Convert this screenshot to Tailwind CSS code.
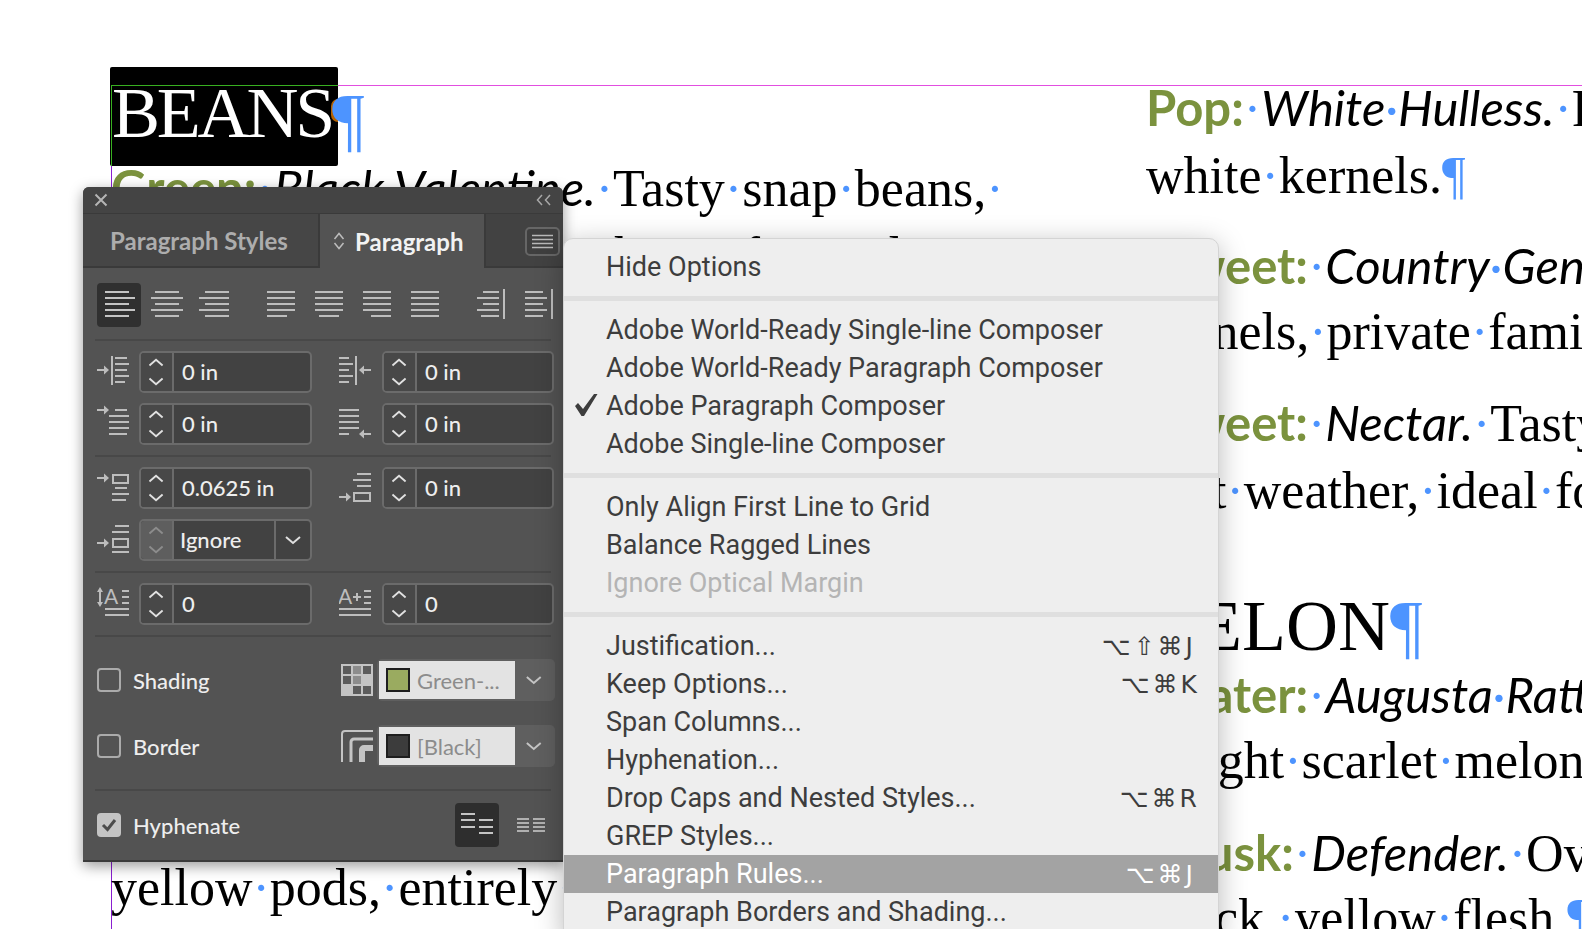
<!DOCTYPE html>
<html lang="en">
<head>
<meta charset="UTF-8">
<title>Paragraph panel</title>
<script src="https://cdn.jsdelivr.net/npm/@tailwindcss/browser@4"></script>
</head>
<body class="bg-white">
<div class="relative w-[1582px] h-[929px] overflow-hidden bg-white text-black font-['Liberation_Serif',serif] text-[52px] leading-[67px]">

  <!-- document canvas -->
  <div class="absolute left-[338px] top-[85px] w-[1244px] h-px bg-[#e24ee0]"></div>
  <div class="absolute left-[111px] top-[166px] w-px h-[763px] bg-[#8a1fd0]"></div>
  <div class="absolute left-[110px] top-[67px] w-[228px] h-[99px] bg-black rounded-[2px]">
    <div class="absolute left-px top-[18px] w-[227px] h-px bg-[#38b020]"></div>
    <div class="absolute left-px top-[18px] w-px h-[81px] bg-[#38b020]"></div>
    <div class="absolute left-[2px] top-[10px] text-white text-[72px] leading-[72px] tracking-[-3.2px] whitespace-nowrap">BEANS</div>
    <div class="absolute left-[221px] top-[32px] w-[7px] h-[23px] bg-[#b56200] rounded-l-full"></div>
  </div>
  <div class="absolute left-[332px] top-[83px] text-[#4d94ff] text-[72px] leading-[72px]">¶</div>

  <div class="absolute whitespace-nowrap left-[111px] top-[154px]"><span class="font-['Lato',sans-serif] font-bold text-[49px] text-[#7b923e]">Green:</span><span class="text-[#4d94ff]">·</span><span class="font-['Lato',sans-serif] italic text-[49px]">Black Valentine.</span><span class="text-[#4d94ff]">·</span>Tasty<span class="text-[#4d94ff]">·</span>snap<span class="text-[#4d94ff]">·</span>beans,<span class="text-[#4d94ff]">·</span></div>
  <div class="absolute whitespace-nowrap left-[594px] top-[222px]">shape,<span class="text-[#4d94ff]">·</span>favored</div>
  <div class="absolute whitespace-nowrap left-[111px] top-[854px]">yellow<span class="text-[#4d94ff]">·</span>pods,<span class="text-[#4d94ff]">·</span>entirely<span class="text-[#4d94ff]">·</span>stringless</div>

  <div class="absolute whitespace-nowrap left-[1146px] top-[74px]"><span class="font-['Lato',sans-serif] font-bold text-[49px] text-[#7b923e]">Pop:</span><span class="text-[#4d94ff]">·</span><span class="font-['Lato',sans-serif] italic text-[49px]">White<span class="text-[#4d94ff]">·</span>Hulless.</span><span class="text-[#4d94ff]">·</span>Plump</div>
  <div class="absolute whitespace-nowrap left-[1146px] top-[142px]">white<span class="text-[#4d94ff]">·</span>kernels.<span class="text-[#4d94ff]">¶</span></div>
  <div class="absolute whitespace-nowrap left-[1160px] top-[232px]"><span class="font-['Lato',sans-serif] font-bold text-[49px] text-[#7b923e]">Sweet:</span><span class="text-[#4d94ff]">·</span><span class="font-['Lato',sans-serif] italic text-[49px]">Country<span class="text-[#4d94ff]">·</span>Gentleman</span></div>
  <div class="absolute whitespace-nowrap left-[1146px] top-[298px]">kernels,<span class="text-[#4d94ff]">·</span>private<span class="text-[#4d94ff]">·</span>family</div>
  <div class="absolute whitespace-nowrap left-[1160px] top-[389px]"><span class="font-['Lato',sans-serif] font-bold text-[49px] text-[#7b923e]">Sweet:</span><span class="text-[#4d94ff]">·</span><span class="font-['Lato',sans-serif] italic text-[49px]">Nectar.</span><span class="text-[#4d94ff]">·</span>Tasty,</div>
  <div class="absolute whitespace-nowrap left-[1160px] top-[457px]">hot<span class="text-[#4d94ff]">·</span>weather,<span class="text-[#4d94ff]">·</span>ideal<span class="text-[#4d94ff]">·</span>for</div>
  <div class="absolute whitespace-nowrap left-[1134px] top-[590px] text-[72px] leading-[72px]">MELON<span class="text-[#4d94ff]">¶</span></div>
  <div class="absolute whitespace-nowrap left-[1160px] top-[661px]"><span class="font-['Lato',sans-serif] font-bold text-[49px] text-[#7b923e]">Water:</span><span class="text-[#4d94ff]">·</span><span class="font-['Lato',sans-serif] italic text-[49px]">Augusta<span class="text-[#4d94ff]">·</span>Rattlesnake</span></div>
  <div class="absolute whitespace-nowrap left-[1160px] top-[727px]">bright<span class="text-[#4d94ff]">·</span>scarlet<span class="text-[#4d94ff]">·</span>melon.</div>
  <div class="absolute whitespace-nowrap left-[1160px] top-[819px]"><span class="font-['Lato',sans-serif] font-bold text-[49px] text-[#7b923e]">Musk:</span><span class="text-[#4d94ff]">·</span><span class="font-['Lato',sans-serif] italic text-[49px]">Defender.</span><span class="text-[#4d94ff]">·</span>Oval</div>
  <div class="absolute whitespace-nowrap left-[1160px] top-[884px]">thick,<span class="text-[#4d94ff]">·</span>yellow<span class="text-[#4d94ff]">·</span>flesh.<span class="text-[#4d94ff]">¶</span></div>

  <!-- paragraph panel -->
  <div class="absolute left-[83px] top-[187px] w-[480px] h-[675px] flex flex-col bg-[#535353] rounded-t-[6px] border-b-2 border-[#3a3a3a] shadow-[0_4px_14px_rgba(0,0,0,0.4)] font-['Lato',sans-serif] text-[#eeeeee]">
    <!-- title bar -->
    <div class="h-[27px] flex items-center justify-between px-[11px] bg-[#444444] rounded-t-[6px] border-b border-[#3a3a3a]">
      <svg class="w-[14px] h-[14px]" viewBox="0 0 14 14" fill="none" stroke="#b5b5b5" stroke-width="2"><path d="M1.5 1.5l11 11M12.5 1.5l-11 11"/></svg>
      <svg class="w-[16px] h-[12px]" viewBox="0 0 16 12" fill="none" stroke="#a8a8a8" stroke-width="1.5"><path d="M6 1L1.5 6 6 11M14 1L9.5 6 14 11"/></svg>
    </div>
    <!-- tabs -->
    <div class="h-[54px] flex bg-[#424242]">
      <div class="w-[235px] flex items-center pl-[27px] bg-[#464646] border-b-2 border-[#3a3a3a] text-[#adadad] font-bold text-[24px] whitespace-nowrap">Paragraph Styles</div>
      <div class="w-[168px] flex items-center pl-[13px] gap-[10px] bg-[#535353] border-l-2 border-r-2 border-[#3a3a3a] font-bold text-[24px] text-[#f2f2f2]">
        <svg class="w-[12px] h-[18px]" viewBox="0 0 12 18" fill="none" stroke="#bdbdbd" stroke-width="1.5"><path d="M1.5 7L6 1.5 10.5 7M1.5 11L6 16.5 10.5 11"/></svg>
        <span>Paragraph</span>
      </div>
      <div class="flex-1 flex items-start border-b-2 border-[#3a3a3a] pl-[39px] pt-[13px]">
        <div class="w-[35px] h-[29px] flex items-center justify-center bg-[#3f3f3f] border-2 border-[#666666] rounded-[5px]">
          <svg class="w-[21px] h-[15px]" viewBox="0 0 21 15" fill="none" stroke="#b8b8b8" stroke-width="1.5"><path d="M0 1.5h21M0 5.5h21M0 9.5h21M0 13.5h21"/></svg>
        </div>
      </div>
    </div>
    <!-- alignment -->
    <div class="h-[71px] flex items-start pl-[14px] pt-[15px] gap-[4px]">
      <svg class="w-[44px] h-[44px] bg-[#303030] rounded-[4px]" viewBox="0 0 44 44" fill="none" stroke="#c4c4c4" stroke-width="2"><path d="M8 9h24M8 15h30M8 21h24M8 27h30M8 33h24"/></svg>
      <svg class="w-[44px] h-[44px]" viewBox="0 0 44 44" fill="none" stroke="#bdbdbd" stroke-width="2"><path d="M10 9h24M6 15h32M10 21h24M6 27h32M10 33h24"/></svg>
      <svg class="w-[44px] h-[44px]" viewBox="0 0 44 44" fill="none" stroke="#bdbdbd" stroke-width="2"><path d="M12 9h24M6 15h30M12 21h24M6 27h30M12 33h24"/></svg>
      <svg class="w-[44px] h-[44px] ml-[18px]" viewBox="0 0 44 44" fill="none" stroke="#bdbdbd" stroke-width="2"><path d="M8 9h28M8 15h28M8 21h28M8 27h28M8 33h20"/></svg>
      <svg class="w-[44px] h-[44px]" viewBox="0 0 44 44" fill="none" stroke="#bdbdbd" stroke-width="2"><path d="M8 9h28M8 15h28M8 21h28M8 27h28M12 33h20"/></svg>
      <svg class="w-[44px] h-[44px]" viewBox="0 0 44 44" fill="none" stroke="#bdbdbd" stroke-width="2"><path d="M8 9h28M8 15h28M8 21h28M8 27h28M16 33h20"/></svg>
      <svg class="w-[44px] h-[44px]" viewBox="0 0 44 44" fill="none" stroke="#bdbdbd" stroke-width="2"><path d="M8 9h28M8 15h28M8 21h28M8 27h28M8 33h28"/></svg>
      <svg class="w-[44px] h-[44px] ml-[18px]" viewBox="0 0 44 44" fill="none" stroke="#bdbdbd" stroke-width="2"><path d="M14 9h16M8 15h22M14 21h16M8 27h22M12 33h18M35 6v30"/></svg>
      <svg class="w-[44px] h-[44px]" viewBox="0 0 44 44" fill="none" stroke="#bdbdbd" stroke-width="2"><path d="M8 9h18M8 15h22M8 21h18M8 27h22M8 33h18M35 6v30"/></svg>
    </div>
    <div class="h-[2px] mx-[12px] bg-[#484848]"></div>

    <!-- indents -->
    <div class="flex pl-[14px] mt-[10px]">
      <div class="flex w-[215px]">
        <svg class="w-[32px] h-[42px] shrink-0" viewBox="0 0 32 42" fill="none" stroke="#bdbdbd" stroke-width="2"><path d="M0 19h8M15 5v29M18 7h12M18 13h14M18 19h12M18 25h14M18 31h10"/><path d="M7 14.5l5 4.5-5 4.5z" fill="#bdbdbd" stroke="none"/></svg>
        <div class="ml-[10px] w-[173px] h-[42px] flex border-2 border-[#6b6b6b] rounded-[5px] bg-[#424242]">
          <svg class="w-[33px] h-[38px] shrink-0 bg-[#484848] rounded-l-[3px] border-r-2 border-[#6b6b6b]" viewBox="0 0 33 38" fill="none" stroke="#e0e0e0" stroke-width="2"><path d="M9 12l7-6 7 6M9 26l7 6 7-6"/></svg>
          <span class="pl-[8px] text-[22px] font-medium leading-[38px]">0 in</span>
        </div>
      </div>
      <div class="flex w-[215px] ml-[27px]">
        <svg class="w-[32px] h-[42px] shrink-0" viewBox="0 0 32 42" fill="none" stroke="#bdbdbd" stroke-width="2"><path d="M0 7h10M0 13h14M0 19h10M0 25h14M0 31h10M17 5v29M24 19h8"/><path d="M25 14.5L20 19l5 4.5z" fill="#bdbdbd" stroke="none"/></svg>
        <div class="ml-[11px] w-[172px] h-[42px] flex border-2 border-[#6b6b6b] rounded-[5px] bg-[#424242]">
          <svg class="w-[33px] h-[38px] shrink-0 bg-[#484848] rounded-l-[3px] border-r-2 border-[#6b6b6b]" viewBox="0 0 33 38" fill="none" stroke="#e0e0e0" stroke-width="2"><path d="M9 12l7-6 7 6M9 26l7 6 7-6"/></svg>
          <span class="pl-[8px] text-[22px] font-medium leading-[38px]">0 in</span>
        </div>
      </div>
    </div>
    <div class="flex pl-[14px] mt-[10px]">
      <div class="flex w-[215px]">
        <svg class="w-[32px] h-[42px] shrink-0" viewBox="0 0 32 42" fill="none" stroke="#bdbdbd" stroke-width="2"><path d="M0 7h8M18 7h12M12 13h20M12 19h20M12 25h20M12 31h18"/><path d="M7 2.5L12 7l-5 4.5z" fill="#bdbdbd" stroke="none"/></svg>
        <div class="ml-[10px] w-[173px] h-[42px] flex border-2 border-[#6b6b6b] rounded-[5px] bg-[#424242]">
          <svg class="w-[33px] h-[38px] shrink-0 bg-[#484848] rounded-l-[3px] border-r-2 border-[#6b6b6b]" viewBox="0 0 33 38" fill="none" stroke="#e0e0e0" stroke-width="2"><path d="M9 12l7-6 7 6M9 26l7 6 7-6"/></svg>
          <span class="pl-[8px] text-[22px] font-medium leading-[38px]">0 in</span>
        </div>
      </div>
      <div class="flex w-[215px] ml-[27px]">
        <svg class="w-[32px] h-[42px] shrink-0" viewBox="0 0 32 42" fill="none" stroke="#bdbdbd" stroke-width="2"><path d="M0 7h20M0 13h20M0 19h20M0 25h20M0 31h10M24 31h8"/><path d="M25 26.5L20 31l5 4.5z" fill="#bdbdbd" stroke="none"/></svg>
        <div class="ml-[11px] w-[172px] h-[42px] flex border-2 border-[#6b6b6b] rounded-[5px] bg-[#424242]">
          <svg class="w-[33px] h-[38px] shrink-0 bg-[#484848] rounded-l-[3px] border-r-2 border-[#6b6b6b]" viewBox="0 0 33 38" fill="none" stroke="#e0e0e0" stroke-width="2"><path d="M9 12l7-6 7 6M9 26l7 6 7-6"/></svg>
          <span class="pl-[8px] text-[22px] font-medium leading-[38px]">0 in</span>
        </div>
      </div>
    </div>
    <div class="h-[2px] mx-[12px] mt-[10px] bg-[#484848]"></div>

    <!-- space before / after -->
    <div class="flex pl-[14px] mt-[10px]">
      <div class="flex w-[215px]">
        <svg class="w-[32px] h-[42px] shrink-0" viewBox="0 0 32 42" fill="none" stroke="#bdbdbd" stroke-width="2"><path d="M0 11h8M18 21h12M15 27h17M15 33h14"/><rect x="16" y="8" width="15" height="8"/><path d="M7 6.5l5 4.5-5 4.5z" fill="#bdbdbd" stroke="none"/></svg>
        <div class="ml-[10px] w-[173px] h-[42px] flex border-2 border-[#6b6b6b] rounded-[5px] bg-[#424242]">
          <svg class="w-[33px] h-[38px] shrink-0 bg-[#484848] rounded-l-[3px] border-r-2 border-[#6b6b6b]" viewBox="0 0 33 38" fill="none" stroke="#e0e0e0" stroke-width="2"><path d="M9 12l7-6 7 6M9 26l7 6 7-6"/></svg>
          <span class="pl-[8px] text-[22px] font-medium leading-[38px]">0.0625 in</span>
        </div>
      </div>
      <div class="flex w-[215px] ml-[27px]">
        <svg class="w-[32px] h-[42px] shrink-0" viewBox="0 0 32 42" fill="none" stroke="#bdbdbd" stroke-width="2"><path d="M18 7h14M14 13h18M18 19h14M0 30h8"/><rect x="15" y="26" width="16" height="8"/><path d="M7 25.5l5 4.5-5 4.5z" fill="#bdbdbd" stroke="none"/></svg>
        <div class="ml-[11px] w-[172px] h-[42px] flex border-2 border-[#6b6b6b] rounded-[5px] bg-[#424242]">
          <svg class="w-[33px] h-[38px] shrink-0 bg-[#484848] rounded-l-[3px] border-r-2 border-[#6b6b6b]" viewBox="0 0 33 38" fill="none" stroke="#e0e0e0" stroke-width="2"><path d="M9 12l7-6 7 6M9 26l7 6 7-6"/></svg>
          <span class="pl-[8px] text-[22px] font-medium leading-[38px]">0 in</span>
        </div>
      </div>
    </div>
    <div class="flex pl-[14px] mt-[10px]">
      <svg class="w-[32px] h-[42px] shrink-0" viewBox="0 0 32 42" fill="none" stroke="#bdbdbd" stroke-width="2"><path d="M18 7h14M15 13h17M0 24h8M15 33h17"/><rect x="16" y="20" width="15" height="8"/><path d="M7 19.5l5 4.5-5 4.5z" fill="#bdbdbd" stroke="none"/></svg>
      <div class="ml-[10px] w-[173px] h-[42px] flex border-2 border-[#6b6b6b] rounded-[5px] bg-[#424242]">
        <svg class="w-[33px] h-[38px] shrink-0 bg-[#5e5e5e] rounded-l-[3px] border-r-2 border-[#6b6b6b]" viewBox="0 0 33 38" fill="none" stroke="#8c8c8c" stroke-width="2"><path d="M9 12l7-6 7 6M9 26l7 6 7-6"/></svg>
        <span class="w-[102px] pl-[6px] text-[22px] font-medium leading-[38px] border-r-2 border-[#6b6b6b]">Ignore</span>
        <svg class="w-[34px] h-[38px]" viewBox="0 0 34 38" fill="none" stroke="#e0e0e0" stroke-width="2"><path d="M10 16l7 6 7-6"/></svg>
      </div>
    </div>
    <div class="h-[2px] mx-[12px] mt-[10px] bg-[#484848]"></div>

    <!-- drop caps -->
    <div class="flex pl-[14px] mt-[10px]">
      <div class="flex w-[215px]">
        <svg class="w-[32px] h-[42px] shrink-0" viewBox="0 0 32 42" fill="none" stroke="#bdbdbd" stroke-width="2"><path d="M3 9v10M25 8h7M25 14h7M25 20h7M8 26h24M8 32h24"/><path d="M3 4l3 5H0zM3 24l3-5H0z" fill="#bdbdbd" stroke="none"/><text x="7" y="21" font-family="Lato" font-size="21" fill="#bdbdbd" stroke="none">A</text></svg>
        <div class="ml-[10px] w-[173px] h-[42px] flex border-2 border-[#6b6b6b] rounded-[5px] bg-[#424242]">
          <svg class="w-[33px] h-[38px] shrink-0 bg-[#484848] rounded-l-[3px] border-r-2 border-[#6b6b6b]" viewBox="0 0 33 38" fill="none" stroke="#e0e0e0" stroke-width="2"><path d="M9 12l7-6 7 6M9 26l7 6 7-6"/></svg>
          <span class="pl-[8px] text-[22px] font-medium leading-[38px]">0</span>
        </div>
      </div>
      <div class="flex w-[215px] ml-[27px]">
        <svg class="w-[32px] h-[42px] shrink-0" viewBox="0 0 32 42" fill="none" stroke="#bdbdbd" stroke-width="2"><path d="M14 14h8M18 10v8M25 8h7M25 14h7M25 20h7M0 26h32M0 32h32"/><text x="-1" y="21" font-family="Lato" font-size="21" fill="#bdbdbd" stroke="none">A</text></svg>
        <div class="ml-[11px] w-[172px] h-[42px] flex border-2 border-[#6b6b6b] rounded-[5px] bg-[#424242]">
          <svg class="w-[33px] h-[38px] shrink-0 bg-[#484848] rounded-l-[3px] border-r-2 border-[#6b6b6b]" viewBox="0 0 33 38" fill="none" stroke="#e0e0e0" stroke-width="2"><path d="M9 12l7-6 7 6M9 26l7 6 7-6"/></svg>
          <span class="pl-[8px] text-[22px] font-medium leading-[38px]">0</span>
        </div>
      </div>
    </div>
    <div class="h-[2px] mx-[12px] mt-[10px] bg-[#484848]"></div>

    <!-- shading -->
    <div class="flex items-center pl-[14px] pr-[8px] mt-[22px] h-[42px]">
      <div class="w-[24px] h-[24px] border-2 border-[#ababab] rounded-[4px]"></div>
      <span class="ml-[12px] text-[22px] font-medium">Shading</span>
      <svg class="ml-auto w-[32px] h-[32px]" viewBox="0 0 32 32"><rect width="32" height="32" fill="#c4c4c4"/><path d="M2 2h8v8H2zM22 2h8v8h-8zM2 12h8v8H2zM22 22h8v8h-8zM12 22h8v8h-8z" fill="#5c5c5c"/><path d="M12 2h8v8h-8zM12 12h8v8h-8z" fill="#8c8c8c"/></svg>
      <div class="ml-[4px] w-[178px] h-[42px] p-[2px] flex bg-[#5f5f5f] rounded-[5px]">
        <div class="w-[138px] h-[38px] flex items-center pl-[7px] bg-[#e3e3e3]">
          <div class="w-[24px] h-[24px] bg-[#9aab60] border-2 border-[#1e1e1e]"></div>
          <span class="ml-[7px] text-[22px] text-[#8c8c8c] whitespace-nowrap">Green-...</span>
        </div>
        <svg class="w-[38px] h-[38px]" viewBox="0 0 38 38" fill="none" stroke="#c4c4c4" stroke-width="2"><path d="M12 16l7 6 7-6"/></svg>
      </div>
    </div>
    <!-- border -->
    <div class="flex items-center pl-[14px] pr-[8px] mt-[24px] h-[42px]">
      <div class="w-[24px] h-[24px] border-2 border-[#ababab] rounded-[4px]"></div>
      <span class="ml-[12px] text-[22px] font-medium">Border</span>
      <svg class="ml-auto w-[32px] h-[32px]" viewBox="0 0 32 32" fill="none" stroke="#c4c4c4"><path d="M1 32V4a3 3 0 0 1 3-3h28" stroke-width="2"/><path d="M10 32V12a3 3 0 0 1 3-3h19" stroke-width="3"/><path d="M21 32V20a2 2 0 0 1 2-2h9" stroke-width="6"/></svg>
      <div class="ml-[4px] w-[178px] h-[42px] p-[2px] flex bg-[#5f5f5f] rounded-[5px]">
        <div class="w-[138px] h-[38px] flex items-center pl-[7px] bg-[#e3e3e3]">
          <div class="w-[24px] h-[24px] bg-[#3c3c3c] border-2 border-[#1e1e1e]"></div>
          <span class="ml-[7px] text-[22px] text-[#8c8c8c] whitespace-nowrap">[Black]</span>
        </div>
        <svg class="w-[38px] h-[38px]" viewBox="0 0 38 38" fill="none" stroke="#c4c4c4" stroke-width="2"><path d="M12 16l7 6 7-6"/></svg>
      </div>
    </div>
    <div class="h-[2px] mx-[12px] mt-[22px] bg-[#484848]"></div>
    <!-- hyphenate -->
    <div class="flex items-center pl-[14px] mt-[12px] h-[44px]">
      <div class="w-[24px] h-[24px] flex items-center justify-center bg-[#c4c4c4] rounded-[4px]">
        <svg class="w-[16px] h-[14px]" viewBox="0 0 16 14" fill="none" stroke="#4c4c4c" stroke-width="3"><path d="M2 7l4.500 4.500L14 2"/></svg>
      </div>
      <span class="ml-[12px] text-[22px] font-medium">Hyphenate</span>
      <svg class="ml-auto w-[44px] h-[44px] bg-[#2e2e2e] rounded-[4px]" viewBox="0 0 44 44" fill="none" stroke="#c4c4c4" stroke-width="2"><path d="M6 11h14M6 17h14M6 24h14M24 17h14M24 24h14M24 30h14"/></svg>
      <svg class="ml-[18px] mr-[18px] w-[28px] h-[14px]" viewBox="0 0 28 14" fill="none" stroke="#b0b0b0" stroke-width="2"><path d="M0 1h12M16 1h12M0 5h12M16 5h12M0 9h12M16 9h12M0 13h12M16 13h12"/></svg>
    </div>
  </div>

  <!-- panel menu -->
  <div class="absolute left-[563px] top-[238px] w-[656px] h-[700px] pt-[9px] bg-[#eeeeee] rounded-t-[10px] border border-[#d4d4d4] shadow-[0_6px_28px_rgba(0,0,0,0.28)] font-['Roboto',sans-serif] text-[27px] text-[#3d3d3d]">
    <div class="h-[38px] pl-[42px] flex items-center">Hide Options</div>
    <div class="h-[5px] mt-[10px] mb-[10px] bg-[#dfdfdf]"></div>
    <div class="h-[38px] pl-[42px] flex items-center">Adobe World-Ready Single-line Composer</div>
    <div class="h-[38px] pl-[42px] flex items-center">Adobe World-Ready Paragraph Composer</div>
    <div class="relative h-[38px] pl-[42px] flex items-center">
      <svg class="absolute left-[11px] top-[7px] w-[23px] h-[22px]" viewBox="0 0 23 22" fill="#3d3d3d"><path d="M0 12l3-3 5 6L19 0h3.500L9 22h-2.500z"/></svg>
      Adobe Paragraph Composer
    </div>
    <div class="h-[38px] pl-[42px] flex items-center">Adobe Single-line Composer</div>
    <div class="h-[5px] mt-[10px] mb-[10px] bg-[#dfdfdf]"></div>
    <div class="h-[38px] pl-[42px] flex items-center">Only Align First Line to Grid</div>
    <div class="h-[38px] pl-[42px] flex items-center">Balance Ragged Lines</div>
    <div class="h-[38px] pl-[42px] flex items-center text-[#b4b4b4]">Ignore Optical Margin</div>
    <div class="h-[5px] mt-[10px] mb-[10px] bg-[#dfdfdf]"></div>
    <div class="h-[38px] pl-[42px] pr-[22px] flex items-center justify-between">Justification...<span class="font-['DejaVu_Sans',sans-serif] text-[25px] tracking-[3px]">⌥⇧⌘J</span></div>
    <div class="h-[38px] pl-[42px] pr-[18px] flex items-center justify-between">Keep Options...<span class="font-['DejaVu_Sans',sans-serif] text-[25px] tracking-[3px]">⌥⌘K</span></div>
    <div class="h-[38px] pl-[42px] flex items-center">Span Columns...</div>
    <div class="h-[38px] pl-[42px] flex items-center">Hyphenation...</div>
    <div class="h-[38px] pl-[42px] pr-[18px] flex items-center justify-between">Drop Caps and Nested Styles...<span class="font-['DejaVu_Sans',sans-serif] text-[25px] tracking-[3px]">⌥⌘R</span></div>
    <div class="h-[38px] pl-[42px] flex items-center">GREP Styles...</div>
    <div class="h-[38px] pl-[42px] pr-[22px] flex items-center justify-between bg-[#a3a3a3] text-white">Paragraph Rules...<span class="font-['DejaVu_Sans',sans-serif] text-[25px] tracking-[3px]">⌥⌘J</span></div>
    <div class="h-[38px] pl-[42px] flex items-center">Paragraph Borders and Shading...</div>
  </div>
</div>
</body>
</html>
